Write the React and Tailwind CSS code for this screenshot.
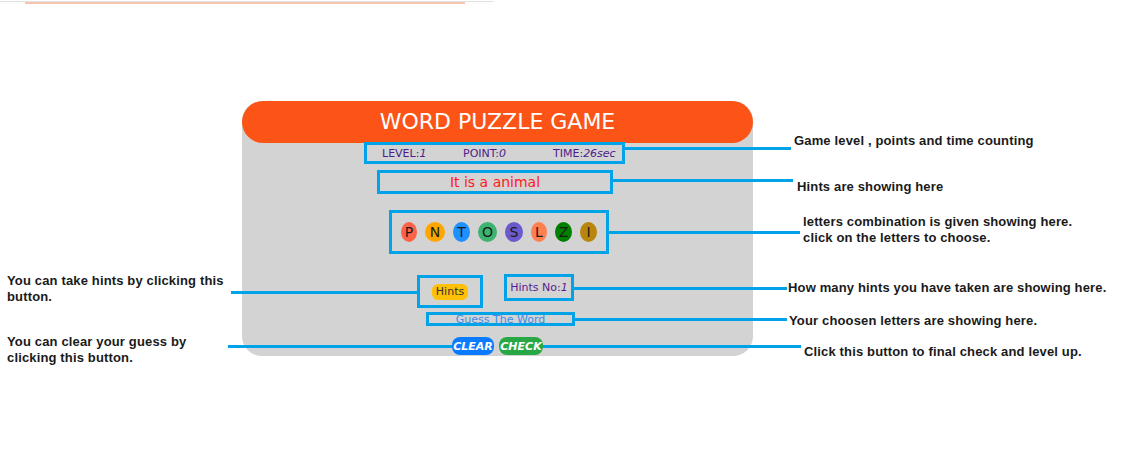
import React from "react";

const comic = { fontFamily: '"Comic Sans MS", "DejaVu Sans", sans-serif' };

const letters = [
  { ch: "P", bg: "bg-[#ff6347]", w: "w-[16px]" },
  { ch: "N", bg: "bg-[#ffa500]", w: "w-[20px]" },
  { ch: "T", bg: "bg-[#1e90ff]", w: "w-[17px]" },
  { ch: "O", bg: "bg-[#3cb371]", w: "w-[19px]" },
  { ch: "S", bg: "bg-[#6a5acd]", w: "w-[18px]" },
  { ch: "L", bg: "bg-[#ff7f50]", w: "w-[16px]" },
  { ch: "Z", bg: "bg-[#008000]", w: "w-[17px]" },
  { ch: "I", bg: "bg-[#b8860b]", w: "w-[17px]" },
];

// callout lines: left, top, width
const lines = [
  "left-[625px] top-[147px] w-[166px]",
  "left-[613px] top-[179px] w-[180px]",
  "left-[609px] top-[231px] w-[191px]",
  "left-[231px] top-[291px] w-[186px]",
  "left-[574px] top-[287px] w-[213px]",
  "left-[575px] top-[318px] w-[212px]",
  "left-[228px] top-[345px] w-[224px]",
  "left-[543px] top-[345px] w-[258px]",
];

const notes = [
  { pos: "left-[794px] top-[133px]", text: ["Game level , points and time counting"] },
  { pos: "left-[797px] top-[179px]", text: ["Hints are showing here"] },
  { pos: "left-[803px] top-[214px]", text: ["letters combination is given showing here.", "click on the letters to choose."] },
  { pos: "left-[7px] top-[273px]", text: ["You can take hints by clicking this", "button."] },
  { pos: "left-[788px] top-[280px]", text: ["How many hints you have taken are showing here."] },
  { pos: "left-[789px] top-[313px]", text: ["Your choosen letters are showing here."] },
  { pos: "left-[7px] top-[334px]", text: ["You can clear your guess by", "clicking this button."] },
  { pos: "left-[804px] top-[344px]", text: ["Click this button to final check and level up."] },
];

export default function App() {
  return (
    <div className="relative w-[1123px] h-[475px] bg-white overflow-hidden">
      {/* cut-off strip at the top */}
      <div className="absolute left-0 top-[1px] w-[494px] h-[1px] bg-[#e2e2e2]"></div>
      <div className="absolute left-[25px] top-[2px] w-[440px] h-[2px] bg-[#f6c4b0] blur-[0.5px]"></div>

      {/* game card */}
      <div className="ml-[242px] pt-[101px]">
        <div className="w-[511px] h-[255px] bg-[#d3d3d3] rounded-[20px] flex flex-col items-start" style={comic}>
          <div className="w-full h-[42px] rounded-full bg-[#fc5417] flex items-center justify-center text-white text-[22px] font-medium leading-none">
            WORD PUZZLE GAME
          </div>

          <div className="ml-[122px] w-[261px] h-[22px] border-[3px] border-[#00a2e8] flex items-center pl-[15px] text-[11px] text-[#4b1c8a] leading-none -mt-[1px]">
            <span className="w-[81px]">LEVEL:<i>1</i></span>
            <span className="w-[90px]">POINT:<i>0</i></span>
            <span>TIME:<i>26sec</i></span>
          </div>

          <div className="ml-[135px] mt-[6px] w-[236px] h-[24px] border-[3px] border-[#00a2e8] flex items-center justify-center text-[14px] text-[#ff1a1a] leading-none">
            It is a animal
          </div>

          <div className="ml-[147px] mt-[16px] w-[220px] h-[44px] border-[3px] border-[#00a2e8] flex items-center justify-center gap-2">
            {letters.map((l) => (
              <span
                key={l.ch}
                className={`${l.w} ${l.bg} h-[20px] rounded-[50%] flex items-center justify-center text-[14px] text-[#1a1a1a] leading-none`}
              >
                {l.ch}
              </span>
            ))}
          </div>

          <div className="ml-[175px] mt-[21px] flex items-start gap-[21px]">
            <div className="w-[66px] h-[33px] border-[3px] border-[#00a2e8] flex items-center justify-center">
              <span className="w-[36px] h-[16px] bg-[#ffc107] rounded-[6px] flex items-center justify-center text-[11px] text-[#333] leading-none">
                Hints
              </span>
            </div>
            <div className="-mt-[1px] w-[70px] h-[27px] border-[3px] border-[#00a2e8] flex items-center justify-center text-[11px] text-[#5b1a8f] leading-none">
              Hints No:<i>1</i>
            </div>
          </div>

          <div className="ml-[184px] mt-[4px] w-[149px] h-[14px] border-[3px] border-[#00a2e8] flex items-center justify-center text-[11px] text-[#3b8ded] leading-none">
            Guess The Word
          </div>

          <div className="ml-[210px] mt-[11px] flex gap-[5px]">
            <span className="w-[42px] h-[18px] rounded-[8px] bg-[#0a7bff] flex items-center justify-center text-white text-[11px] font-bold italic leading-none">
              CLEAR
            </span>
            <span className="w-[44px] h-[18px] rounded-[8px] bg-[#28a745] flex items-center justify-center text-white text-[11px] font-bold italic leading-none">
              CHECK
            </span>
          </div>
        </div>
      </div>

      {/* callout lines */}
      {lines.map((l, i) => (
        <div key={i} className={`absolute ${l} h-[3px] bg-[#00a2e8]`}></div>
      ))}

      {/* callout notes */}
      {notes.map((n, i) => (
        <div
          key={i}
          className={`absolute ${n.pos} text-[13px] leading-[16px] font-bold text-[#1a1a1a] tracking-[0.15px] whitespace-nowrap`}
          style={{ fontFamily: '"Liberation Sans", Arial, sans-serif' }}
        >
          {n.text.map((t, j) => (
            <div key={j}>{t}</div>
          ))}
        </div>
      ))}
    </div>
  );
}
